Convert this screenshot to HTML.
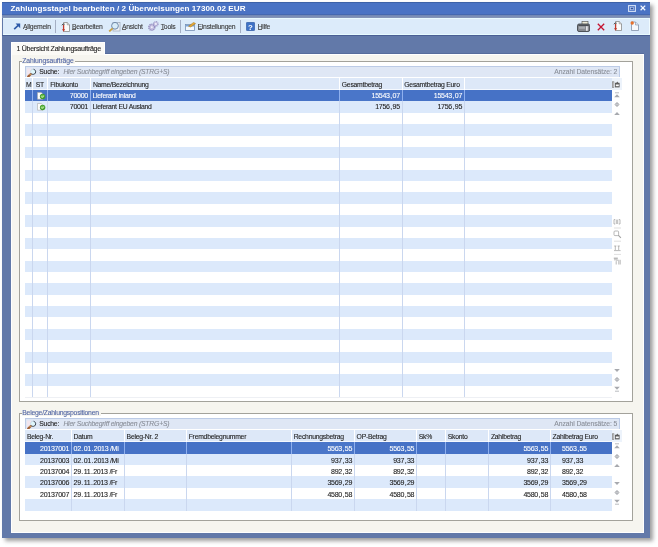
<!DOCTYPE html>
<html><head><meta charset="utf-8"><style>
html,body{margin:0;padding:0}
body{width:658px;height:547px;position:relative;overflow:hidden;background:#fff;font-family:"Liberation Sans",sans-serif;font-size:6.8px;color:#222}
div{position:absolute}
.t{position:absolute;white-space:nowrap;line-height:8px;letter-spacing:-0.23px;-webkit-text-stroke:0.1px currentColor}
svg{display:block}
.p{margin:0 0.6px}
</style></head><body><div style="position:absolute;left:0;top:0;width:658px;height:547px;filter:blur(0.4px)">
<div style="left:4.50px;top:4.50px;width:645.50px;height:533.50px;background:#888;box-shadow:1.5px 1.5px 4px 1.5px rgba(0,0,0,0.38)"></div>
<div style="left:1.50px;top:1.50px;width:648.10px;height:536.00px;background:#6279a9"></div>
<div style="left:1.50px;top:1.50px;width:648.10px;height:13.50px;background:#4a73c4"></div>
<div style="left:1.50px;top:1.50px;width:648.10px;height:1.00px;background:#3d62a8"></div>
<div style="left:1.50px;top:13.80px;width:648.10px;height:1.00px;background:#4468b0"></div>
<div style="left:1.50px;top:14.80px;width:648.10px;height:3.00px;background:linear-gradient(#6f86b4,#8797b8)"></div>
<span class="t" style="left:10.60px;top:5.00px;color:#fff;font-weight:bold;font-size:8.1px;letter-spacing:0.06px;-webkit-text-stroke:0">Zahlungsstapel bearbeiten / 2 Überweisungen 17300.02 EUR</span>
<div style="left:3.00px;top:17.80px;width:646.60px;height:17.20px;background:#dcebfa;border-top:1.5px solid #e8fbff;border-bottom:1.5px solid #e8fbff;border-right:1px solid #f0fbff;box-sizing:border-box"></div>
<div style="left:1.50px;top:35.00px;width:648.10px;height:1.00px;background:#4a5f94"></div>
<div style="left:11.00px;top:53.30px;width:632.90px;height:1.00px;background:#566c9c"></div>
<div style="left:11.00px;top:54.30px;width:632.90px;height:478.30px;background:#f6f5ef;border:1px solid #fff;border-top-width:1.5px;box-sizing:border-box"></div>
<div style="left:10.50px;top:42.00px;width:94.50px;height:13.00px;background:#fbfaf6;border:1px solid #fff;border-bottom:none;box-sizing:border-box"></div>
<span class="t" style="left:16.50px;top:44.85px;;font-size:7.05px;letter-spacing:-0.29px">1 Übersicht Zahlungsaufträge</span>
<div style="left:19.30px;top:61.30px;width:613.50px;height:340.30px;background:#fff;border:1px solid #a3a29b;box-sizing:border-box"></div>
<div style="left:21.50px;top:57.30px;width:53.50px;height:7.00px;background:#f6f5ef"></div>
<span class="t" style="left:22.30px;top:56.80px;color:#5266a4;letter-spacing:-0.1px">Zahlungsaufträge</span>
<div style="left:24.60px;top:66.00px;width:595.80px;height:11.80px;background:#dfe7f5;border:1px solid #bccbe6;box-sizing:border-box"></div>
<svg style="position:absolute;left:25.5px;top:67.00px" width="11" height="11" viewBox="0 0 11 11"><rect x="1" y="1.5" width="4" height="7.5" fill="#f2e6ee"/><circle cx="7.1" cy="4.8" r="2.6" fill="#dff6fb" stroke="#c0d0dc" stroke-width="0.6"/><path d="M7.6 2.25 A2.6 2.6 0 1 1 5.3 6.7" fill="none" stroke="#3e4652" stroke-width="1"/><path d="M4.6 7.2 L2.2 9.6" stroke="#a0603a" stroke-width="2.2" stroke-linecap="round"/><path d="M4.6 7 L3.6 8" stroke="#e0c060" stroke-width="1"/></svg>
<span class="t" style="left:39.30px;top:68.30px;color:#222">Suche:</span>
<span class="t" style="left:63.40px;top:68.30px;color:#8a8f99;font-style:italic;letter-spacing:-0.19px">Hier Suchbegriff eingeben (STRG+S)</span>
<span class="t" style="right:40.70px;top:68.30px;color:#8a8f99;letter-spacing:-0.08px">Anzahl Datensätze: 2</span>
<div style="left:24.60px;top:77.40px;width:597.40px;height:12.70px;background:#dde8f8;border-top:1px solid #fff;border-bottom:1px solid #f4f8fe;box-sizing:border-box"></div>
<div style="left:611.60px;top:77.90px;width:10.40px;height:11.70px;background:#edf3fb"></div>
<svg style="position:absolute;left:612px;top:80.60px" width="8" height="7" viewBox="0 0 8 7"><rect x="0.4" y="0.8" width="1.5" height="5.6" fill="#ececec" stroke="#6a6a6a" stroke-width="0.6"/><rect x="3" y="1.8" width="4.6" height="4.6" fill="#5c5c5c"/><rect x="3.8" y="3.5" width="3" height="1.7" fill="#fafafa"/><path d="M4.3 1.9 L5.3 0.5 L6.3 1.9 Z" fill="#5c5c5c"/></svg>
<span class="t" style="left:25.90px;top:80.60px;">M</span>
<span class="t" style="left:35.70px;top:80.60px;">ST</span>
<span class="t" style="left:50.20px;top:80.60px;">Fibukonto</span>
<span class="t" style="left:92.90px;top:80.60px;">Name/Bezeichnung</span>
<span class="t" style="left:341.80px;top:80.60px;">Gesamtbetrag</span>
<span class="t" style="left:404.30px;top:80.60px;">Gesamtbetrag Euro</span>
<div style="left:24.60px;top:90.10px;width:587.00px;height:11.37px;background:#4672c6"></div>
<div style="left:339.50px;top:90.10px;width:62.50px;height:11.37px;background:#4a76c9"></div>
<div style="left:24.60px;top:101.47px;width:587.00px;height:11.37px;background:#dce9fb"></div>
<div style="left:24.60px;top:112.84px;width:587.00px;height:11.37px;background:#fff"></div>
<div style="left:24.60px;top:124.21px;width:587.00px;height:11.37px;background:#dce9fb"></div>
<div style="left:24.60px;top:135.58px;width:587.00px;height:11.37px;background:#fff"></div>
<div style="left:24.60px;top:146.95px;width:587.00px;height:11.37px;background:#dce9fb"></div>
<div style="left:24.60px;top:158.32px;width:587.00px;height:11.37px;background:#fff"></div>
<div style="left:24.60px;top:169.69px;width:587.00px;height:11.37px;background:#dce9fb"></div>
<div style="left:24.60px;top:181.06px;width:587.00px;height:11.37px;background:#fff"></div>
<div style="left:24.60px;top:192.43px;width:587.00px;height:11.37px;background:#dce9fb"></div>
<div style="left:24.60px;top:203.80px;width:587.00px;height:11.37px;background:#fff"></div>
<div style="left:24.60px;top:215.17px;width:587.00px;height:11.37px;background:#dce9fb"></div>
<div style="left:24.60px;top:226.54px;width:587.00px;height:11.37px;background:#fff"></div>
<div style="left:24.60px;top:237.91px;width:587.00px;height:11.37px;background:#dce9fb"></div>
<div style="left:24.60px;top:249.28px;width:587.00px;height:11.37px;background:#fff"></div>
<div style="left:24.60px;top:260.65px;width:587.00px;height:11.37px;background:#dce9fb"></div>
<div style="left:24.60px;top:272.02px;width:587.00px;height:11.37px;background:#fff"></div>
<div style="left:24.60px;top:283.39px;width:587.00px;height:11.37px;background:#dce9fb"></div>
<div style="left:24.60px;top:294.76px;width:587.00px;height:11.37px;background:#fff"></div>
<div style="left:24.60px;top:306.13px;width:587.00px;height:11.37px;background:#dce9fb"></div>
<div style="left:24.60px;top:317.50px;width:587.00px;height:11.37px;background:#fff"></div>
<div style="left:24.60px;top:328.87px;width:587.00px;height:11.37px;background:#dce9fb"></div>
<div style="left:24.60px;top:340.24px;width:587.00px;height:11.37px;background:#fff"></div>
<div style="left:24.60px;top:351.61px;width:587.00px;height:11.37px;background:#dce9fb"></div>
<div style="left:24.60px;top:362.98px;width:587.00px;height:11.37px;background:#fff"></div>
<div style="left:24.60px;top:374.35px;width:587.00px;height:11.37px;background:#dce9fb"></div>
<div style="left:24.60px;top:385.72px;width:587.00px;height:11.37px;background:#fff"></div>
<div style="left:31.90px;top:77.40px;width:1.00px;height:12.70px;background:#fff"></div>
<div style="left:31.90px;top:90.10px;width:1.00px;height:306.99px;background:#cad7ef"></div>
<div style="left:31.90px;top:90.10px;width:1.00px;height:11.37px;background:#8fb0ee"></div>
<div style="left:46.70px;top:77.40px;width:1.00px;height:12.70px;background:#fff"></div>
<div style="left:46.70px;top:90.10px;width:1.00px;height:306.99px;background:#cad7ef"></div>
<div style="left:46.70px;top:90.10px;width:1.00px;height:11.37px;background:#8fb0ee"></div>
<div style="left:89.70px;top:77.40px;width:1.00px;height:12.70px;background:#fff"></div>
<div style="left:89.70px;top:90.10px;width:1.00px;height:306.99px;background:#cad7ef"></div>
<div style="left:89.70px;top:90.10px;width:1.00px;height:11.37px;background:#8fb0ee"></div>
<div style="left:339.00px;top:77.40px;width:1.00px;height:12.70px;background:#fff"></div>
<div style="left:339.00px;top:90.10px;width:1.00px;height:306.99px;background:#cad7ef"></div>
<div style="left:339.00px;top:90.10px;width:1.00px;height:11.37px;background:#8fb0ee"></div>
<div style="left:401.50px;top:77.40px;width:1.00px;height:12.70px;background:#fff"></div>
<div style="left:401.50px;top:90.10px;width:1.00px;height:306.99px;background:#cad7ef"></div>
<div style="left:401.50px;top:90.10px;width:1.00px;height:11.37px;background:#8fb0ee"></div>
<div style="left:463.80px;top:77.40px;width:1.00px;height:12.70px;background:#fff"></div>
<div style="left:463.80px;top:90.10px;width:1.00px;height:306.99px;background:#cad7ef"></div>
<div style="left:463.80px;top:90.10px;width:1.00px;height:11.37px;background:#8fb0ee"></div>
<svg style="position:absolute;left:36.90px;top:91.50px" width="9" height="8" viewBox="0 0 9 8"><path d="M0.5 0.5 H4.2 L5.8 2.1 V7.2 H0.5 Z" fill="#fcfcfc" stroke="#a9a9a9" stroke-width="0.6"/><circle cx="5.6" cy="4.5" r="2.7" fill="#3f9a2e"/><circle cx="5.4" cy="4.2" r="1.8" fill="#6cc04c"/><path d="M4.4 4.6 L5.3 5.4 L6.8 3.6" stroke="#e8ffd8" stroke-width="0.8" fill="none"/></svg>
<span class="t" style="right:570.00px;top:91.95px;color:#fff;font-size:7.05px;letter-spacing:-0.29px">70000</span>
<span class="t" style="left:92.40px;top:92.10px;color:#fff">Lieferant Inland</span>
<span class="t" style="right:258.20px;top:91.95px;color:#fff;font-size:7.05px;letter-spacing:-0.29px">15543<span class="p">,</span>07</span>
<span class="t" style="right:195.90px;top:91.95px;color:#fff;font-size:7.05px;letter-spacing:-0.29px">15543<span class="p">,</span>07</span>
<svg style="position:absolute;left:36.90px;top:102.87px" width="9" height="8" viewBox="0 0 9 8"><path d="M0.5 0.5 H4.2 L5.8 2.1 V7.2 H0.5 Z" fill="#fcfcfc" stroke="#a9a9a9" stroke-width="0.6"/><circle cx="5.6" cy="4.5" r="2.7" fill="#3f9a2e"/><circle cx="5.4" cy="4.2" r="1.8" fill="#6cc04c"/><path d="M4.4 4.6 L5.3 5.4 L6.8 3.6" stroke="#e8ffd8" stroke-width="0.8" fill="none"/></svg>
<span class="t" style="right:570.00px;top:103.32px;color:#222;font-size:7.05px;letter-spacing:-0.29px">70001</span>
<span class="t" style="left:92.40px;top:103.47px;color:#222">Lieferant EU Ausland</span>
<span class="t" style="right:258.20px;top:103.32px;color:#222;font-size:7.05px;letter-spacing:-0.29px">1756<span class="p">,</span>95</span>
<span class="t" style="right:195.90px;top:103.32px;color:#222;font-size:7.05px;letter-spacing:-0.29px">1756<span class="p">,</span>95</span>
<div style="left:24.60px;top:397.00px;width:587.00px;height:1.00px;background:#eef0f4"></div>
<svg style="position:absolute;left:612.8px;top:91.50px" width="8" height="7" viewBox="0 0 8 7"><path d="M2 0.8 H6" stroke="#a7a9ae" stroke-width="0.8"/><path d="M1.2 5.2 L4 2.2 L6.8 5.2 Z" fill="#a7a9ae"/></svg>
<svg style="position:absolute;left:612.8px;top:100.50px" width="8" height="7" viewBox="0 0 8 7"><path d="M4 1 L6.6 3.5 L4 6 L1.4 3.5 Z" fill="#a7a9ae"/><path d="M4 1.5 V5.5 M2 3.5 H6" stroke="#d8dadd" stroke-width="0.5"/></svg>
<svg style="position:absolute;left:612.8px;top:109.50px" width="8" height="7" viewBox="0 0 8 7"><path d="M1.2 5 L4 2 L6.8 5 Z" fill="#a7a9ae"/></svg>
<svg style="position:absolute;left:612.8px;top:366.50px" width="8" height="7" viewBox="0 0 8 7"><path d="M1.2 2 L4 5 L6.8 2 Z" fill="#a7a9ae"/></svg>
<svg style="position:absolute;left:612.8px;top:375.80px" width="8" height="7" viewBox="0 0 8 7"><path d="M4 1 L6.6 3.5 L4 6 L1.4 3.5 Z" fill="#a7a9ae"/><path d="M4 1.5 V5.5 M2 3.5 H6" stroke="#d8dadd" stroke-width="0.5"/></svg>
<svg style="position:absolute;left:612.8px;top:384.50px" width="8" height="7" viewBox="0 0 8 7"><path d="M2 6.2 H6" stroke="#a7a9ae" stroke-width="0.8"/><path d="M1.2 1.8 L4 4.8 L6.8 1.8 Z" fill="#a7a9ae"/></svg>
<svg style="position:absolute;left:613px;top:217px" width="9" height="49" viewBox="0 0 9 49"><g fill="none" stroke="#a2a2a2" stroke-width="0.75"><path d="M2.2 2.6 H1 V7 H2.2 M5.8 2.6 H7 V7 H5.8 M3.3 2.6 V7 M4.7 2.6 V7"/><path d="M1 11 H8" stroke="#c9c9c9" stroke-width="0.6"/><rect x="1" y="14" width="4.6" height="4.6" rx="1"/><path d="M5.2 18.2 L7.9 20.9" stroke-width="1.1"/><path d="M1 24.2 H8" stroke="#c9c9c9" stroke-width="0.6"/><path d="M1.2 29 H3.4 M2.3 29 V33 M4.6 29 H6.8 M5.7 29 V33 M1 33.6 H7.6"/><path d="M1 37.4 H8" stroke="#c9c9c9" stroke-width="0.6"/><path d="M0.8 41.2 H4.8" stroke="#8e8e8e" stroke-width="0.9"/><path d="M1 42.8 H4.6 L3.2 44.6 V47.5 M5.8 42.8 V47.5 M7.2 42.8 V47.5"/></g></svg>
<div style="left:19.30px;top:413.00px;width:613.50px;height:108.00px;background:#fff;border:1px solid #a3a29b;box-sizing:border-box"></div>
<div style="left:21.50px;top:409.00px;width:79.50px;height:7.00px;background:#f6f5ef"></div>
<span class="t" style="left:22.30px;top:408.50px;color:#5266a4;letter-spacing:-0.22px">Belege/Zahlungspositionen</span>
<div style="left:24.60px;top:418.00px;width:595.80px;height:11.80px;background:#dfe7f5;border:1px solid #bccbe6;box-sizing:border-box"></div>
<svg style="position:absolute;left:25.5px;top:419.00px" width="11" height="11" viewBox="0 0 11 11"><rect x="1" y="1.5" width="4" height="7.5" fill="#f2e6ee"/><circle cx="7.1" cy="4.8" r="2.6" fill="#dff6fb" stroke="#c0d0dc" stroke-width="0.6"/><path d="M7.6 2.25 A2.6 2.6 0 1 1 5.3 6.7" fill="none" stroke="#3e4652" stroke-width="1"/><path d="M4.6 7.2 L2.2 9.6" stroke="#a0603a" stroke-width="2.2" stroke-linecap="round"/><path d="M4.6 7 L3.6 8" stroke="#e0c060" stroke-width="1"/></svg>
<span class="t" style="left:39.30px;top:420.30px;color:#222">Suche:</span>
<span class="t" style="left:63.40px;top:420.30px;color:#8a8f99;font-style:italic;letter-spacing:-0.19px">Hier Suchbegriff eingeben (STRG+S)</span>
<span class="t" style="right:40.70px;top:420.30px;color:#8a8f99;letter-spacing:-0.08px">Anzahl Datensätze: 5</span>
<div style="left:24.60px;top:429.40px;width:597.40px;height:12.90px;background:#dde8f8;border-top:1px solid #fff;border-bottom:1px solid #f4f8fe;box-sizing:border-box"></div>
<div style="left:611.60px;top:429.90px;width:10.40px;height:11.90px;background:#edf3fb"></div>
<svg style="position:absolute;left:612px;top:432.60px" width="8" height="7" viewBox="0 0 8 7"><rect x="0.4" y="0.8" width="1.5" height="5.6" fill="#ececec" stroke="#6a6a6a" stroke-width="0.6"/><rect x="3" y="1.8" width="4.6" height="4.6" fill="#5c5c5c"/><rect x="3.8" y="3.5" width="3" height="1.7" fill="#fafafa"/><path d="M4.3 1.9 L5.3 0.5 L6.3 1.9 Z" fill="#5c5c5c"/></svg>
<span class="t" style="left:26.90px;top:432.60px;">Beleg-Nr.</span>
<span class="t" style="left:73.60px;top:432.60px;">Datum</span>
<span class="t" style="left:126.60px;top:432.60px;">Beleg-Nr. 2</span>
<span class="t" style="left:188.70px;top:432.60px;">Fremdbelegnummer</span>
<span class="t" style="left:293.70px;top:432.60px;">Rechnungsbetrag</span>
<span class="t" style="left:356.60px;top:432.60px;">OP-Betrag</span>
<span class="t" style="left:418.70px;top:432.60px;">Sk%</span>
<span class="t" style="left:447.70px;top:432.60px;">Skonto</span>
<span class="t" style="left:490.90px;top:432.60px;">Zahlbetrag</span>
<span class="t" style="left:552.60px;top:432.60px;">Zahlbetrag Euro</span>
<div style="left:24.60px;top:442.30px;width:587.00px;height:11.37px;background:#4672c6"></div>
<div style="left:291.40px;top:442.30px;width:62.90px;height:11.37px;background:#4a76c9"></div>
<div style="left:24.60px;top:453.67px;width:587.00px;height:11.37px;background:#dce9fb"></div>
<div style="left:24.60px;top:465.04px;width:587.00px;height:11.37px;background:#fff"></div>
<div style="left:24.60px;top:476.41px;width:587.00px;height:11.37px;background:#dce9fb"></div>
<div style="left:24.60px;top:487.78px;width:587.00px;height:11.37px;background:#fff"></div>
<div style="left:24.60px;top:499.15px;width:587.00px;height:11.37px;background:#dce9fb"></div>
<div style="left:70.80px;top:429.40px;width:1.00px;height:12.90px;background:#fff"></div>
<div style="left:70.80px;top:442.30px;width:1.00px;height:68.22px;background:#cad7ef"></div>
<div style="left:70.80px;top:442.30px;width:1.00px;height:11.37px;background:#8fb0ee"></div>
<div style="left:123.80px;top:429.40px;width:1.00px;height:12.90px;background:#fff"></div>
<div style="left:123.80px;top:442.30px;width:1.00px;height:68.22px;background:#cad7ef"></div>
<div style="left:123.80px;top:442.30px;width:1.00px;height:11.37px;background:#8fb0ee"></div>
<div style="left:185.90px;top:429.40px;width:1.00px;height:12.90px;background:#fff"></div>
<div style="left:185.90px;top:442.30px;width:1.00px;height:68.22px;background:#cad7ef"></div>
<div style="left:185.90px;top:442.30px;width:1.00px;height:11.37px;background:#8fb0ee"></div>
<div style="left:290.90px;top:429.40px;width:1.00px;height:12.90px;background:#fff"></div>
<div style="left:290.90px;top:442.30px;width:1.00px;height:68.22px;background:#cad7ef"></div>
<div style="left:290.90px;top:442.30px;width:1.00px;height:11.37px;background:#8fb0ee"></div>
<div style="left:353.80px;top:429.40px;width:1.00px;height:12.90px;background:#fff"></div>
<div style="left:353.80px;top:442.30px;width:1.00px;height:68.22px;background:#cad7ef"></div>
<div style="left:353.80px;top:442.30px;width:1.00px;height:11.37px;background:#8fb0ee"></div>
<div style="left:415.90px;top:429.40px;width:1.00px;height:12.90px;background:#fff"></div>
<div style="left:415.90px;top:442.30px;width:1.00px;height:68.22px;background:#cad7ef"></div>
<div style="left:415.90px;top:442.30px;width:1.00px;height:11.37px;background:#8fb0ee"></div>
<div style="left:444.90px;top:429.40px;width:1.00px;height:12.90px;background:#fff"></div>
<div style="left:444.90px;top:442.30px;width:1.00px;height:68.22px;background:#cad7ef"></div>
<div style="left:444.90px;top:442.30px;width:1.00px;height:11.37px;background:#8fb0ee"></div>
<div style="left:488.10px;top:429.40px;width:1.00px;height:12.90px;background:#fff"></div>
<div style="left:488.10px;top:442.30px;width:1.00px;height:68.22px;background:#cad7ef"></div>
<div style="left:488.10px;top:442.30px;width:1.00px;height:11.37px;background:#8fb0ee"></div>
<div style="left:549.80px;top:429.40px;width:1.00px;height:12.90px;background:#fff"></div>
<div style="left:549.80px;top:442.30px;width:1.00px;height:68.22px;background:#cad7ef"></div>
<div style="left:549.80px;top:442.30px;width:1.00px;height:11.37px;background:#8fb0ee"></div>
<span class="t" style="right:588.90px;top:445.25px;color:#fff;font-size:7.05px;letter-spacing:-0.29px">20137001</span>
<span class="t" style="left:73.50px;top:445.25px;color:#fff;font-size:7.05px;letter-spacing:-0.29px">02<span class="p">.</span>01<span class="p">.</span>2013 /Mi</span>
<span class="t" style="right:305.90px;top:445.25px;color:#fff;font-size:7.05px;letter-spacing:-0.29px">5563<span class="p">,</span>55</span>
<span class="t" style="right:243.80px;top:445.25px;color:#fff;font-size:7.05px;letter-spacing:-0.29px">5563<span class="p">,</span>55</span>
<span class="t" style="right:109.90px;top:445.25px;color:#fff;font-size:7.05px;letter-spacing:-0.29px">5563<span class="p">,</span>55</span>
<span class="t" style="left:562.00px;top:445.25px;color:#fff;font-size:7.05px;letter-spacing:-0.29px">5563<span class="p">,</span>55</span>
<span class="t" style="right:588.90px;top:456.62px;color:#222;font-size:7.05px;letter-spacing:-0.29px">20137003</span>
<span class="t" style="left:73.50px;top:456.62px;color:#222;font-size:7.05px;letter-spacing:-0.29px">02<span class="p">.</span>01<span class="p">.</span>2013 /Mi</span>
<span class="t" style="right:305.90px;top:456.62px;color:#222;font-size:7.05px;letter-spacing:-0.29px">937<span class="p">,</span>33</span>
<span class="t" style="right:243.80px;top:456.62px;color:#222;font-size:7.05px;letter-spacing:-0.29px">937<span class="p">,</span>33</span>
<span class="t" style="right:109.90px;top:456.62px;color:#222;font-size:7.05px;letter-spacing:-0.29px">937<span class="p">,</span>33</span>
<span class="t" style="left:562.00px;top:456.62px;color:#222;font-size:7.05px;letter-spacing:-0.29px">937<span class="p">,</span>33</span>
<span class="t" style="right:588.90px;top:467.99px;color:#222;font-size:7.05px;letter-spacing:-0.29px">20137004</span>
<span class="t" style="left:73.50px;top:467.99px;color:#222;font-size:7.05px;letter-spacing:-0.29px">29<span class="p">.</span>11<span class="p">.</span>2013 /Fr</span>
<span class="t" style="right:305.90px;top:467.99px;color:#222;font-size:7.05px;letter-spacing:-0.29px">892<span class="p">,</span>32</span>
<span class="t" style="right:243.80px;top:467.99px;color:#222;font-size:7.05px;letter-spacing:-0.29px">892<span class="p">,</span>32</span>
<span class="t" style="right:109.90px;top:467.99px;color:#222;font-size:7.05px;letter-spacing:-0.29px">892<span class="p">,</span>32</span>
<span class="t" style="left:562.00px;top:467.99px;color:#222;font-size:7.05px;letter-spacing:-0.29px">892<span class="p">,</span>32</span>
<span class="t" style="right:588.90px;top:479.36px;color:#222;font-size:7.05px;letter-spacing:-0.29px">20137006</span>
<span class="t" style="left:73.50px;top:479.36px;color:#222;font-size:7.05px;letter-spacing:-0.29px">29<span class="p">.</span>11<span class="p">.</span>2013 /Fr</span>
<span class="t" style="right:305.90px;top:479.36px;color:#222;font-size:7.05px;letter-spacing:-0.29px">3569<span class="p">,</span>29</span>
<span class="t" style="right:243.80px;top:479.36px;color:#222;font-size:7.05px;letter-spacing:-0.29px">3569<span class="p">,</span>29</span>
<span class="t" style="right:109.90px;top:479.36px;color:#222;font-size:7.05px;letter-spacing:-0.29px">3569<span class="p">,</span>29</span>
<span class="t" style="left:562.00px;top:479.36px;color:#222;font-size:7.05px;letter-spacing:-0.29px">3569<span class="p">,</span>29</span>
<span class="t" style="right:588.90px;top:490.73px;color:#222;font-size:7.05px;letter-spacing:-0.29px">20137007</span>
<span class="t" style="left:73.50px;top:490.73px;color:#222;font-size:7.05px;letter-spacing:-0.29px">29<span class="p">.</span>11<span class="p">.</span>2013 /Fr</span>
<span class="t" style="right:305.90px;top:490.73px;color:#222;font-size:7.05px;letter-spacing:-0.29px">4580<span class="p">,</span>58</span>
<span class="t" style="right:243.80px;top:490.73px;color:#222;font-size:7.05px;letter-spacing:-0.29px">4580<span class="p">,</span>58</span>
<span class="t" style="right:109.90px;top:490.73px;color:#222;font-size:7.05px;letter-spacing:-0.29px">4580<span class="p">,</span>58</span>
<span class="t" style="left:562.00px;top:490.73px;color:#222;font-size:7.05px;letter-spacing:-0.29px">4580<span class="p">,</span>58</span>
<svg style="position:absolute;left:612.8px;top:443.10px" width="8" height="7" viewBox="0 0 8 7"><path d="M2 0.8 H6" stroke="#a7a9ae" stroke-width="0.8"/><path d="M1.2 5.2 L4 2.2 L6.8 5.2 Z" fill="#a7a9ae"/></svg>
<svg style="position:absolute;left:612.8px;top:452.80px" width="8" height="7" viewBox="0 0 8 7"><path d="M4 1 L6.6 3.5 L4 6 L1.4 3.5 Z" fill="#a7a9ae"/><path d="M4 1.5 V5.5 M2 3.5 H6" stroke="#d8dadd" stroke-width="0.5"/></svg>
<svg style="position:absolute;left:612.8px;top:461.50px" width="8" height="7" viewBox="0 0 8 7"><path d="M1.2 5 L4 2 L6.8 5 Z" fill="#a7a9ae"/></svg>
<svg style="position:absolute;left:612.8px;top:479.70px" width="8" height="7" viewBox="0 0 8 7"><path d="M1.2 2 L4 5 L6.8 2 Z" fill="#a7a9ae"/></svg>
<svg style="position:absolute;left:612.8px;top:489.00px" width="8" height="7" viewBox="0 0 8 7"><path d="M4 1 L6.6 3.5 L4 6 L1.4 3.5 Z" fill="#a7a9ae"/><path d="M4 1.5 V5.5 M2 3.5 H6" stroke="#d8dadd" stroke-width="0.5"/></svg>
<svg style="position:absolute;left:612.8px;top:498.30px" width="8" height="7" viewBox="0 0 8 7"><path d="M2 6.2 H6" stroke="#a7a9ae" stroke-width="0.8"/><path d="M1.2 1.8 L4 4.8 L6.8 1.8 Z" fill="#a7a9ae"/></svg>
<svg style="position:absolute;left:12.5px;top:23px" width="8" height="7" viewBox="0 0 8 7"><path d="M1.2 6.2 L6 1.6" stroke="#2f5aa8" stroke-width="1.6" fill="none"/><path d="M2.6 0.6 H7.2 V5.2 Z" fill="#2f5aa8"/></svg>
<span class="t" style="left:23.00px;top:22.80px;color:#383838">Allgemein</span>
<div style="left:24.50px;top:29.30px;width:2.00px;height:0.70px;background:#666"></div>
<div style="left:54.90px;top:20.00px;width:1.00px;height:13.00px;background:#a4afc4"></div>
<svg style="position:absolute;left:61px;top:21.7px" width="9" height="10" viewBox="0 0 9 10"><path d="M2.5 0.5 H6.2 L8.5 2.8 V9.5 H2.5 Z" fill="#fbfbfb" stroke="#8a8a8a" stroke-width="0.8"/><path d="M6.2 0.5 V2.8 H8.5" fill="#ddd" stroke="#8a8a8a" stroke-width="0.6"/><path d="M0.8 3.2 Q1.8 1.4 3.8 2.2" stroke="#444" stroke-width="0.9" fill="none"/><path d="M2.6 3 V8" stroke="#c0382a" stroke-width="1.3"/><path d="M1 7.2 L2.6 9.8 L4.2 7.2 Z" fill="#c0382a"/></svg>
<span class="t" style="left:72.00px;top:22.80px;color:#383838">Bearbeiten</span>
<div style="left:72.00px;top:29.30px;width:3.50px;height:0.70px;background:#666"></div>
<svg style="position:absolute;left:108px;top:20.7px" width="13" height="11" viewBox="0 0 13 11"><rect x="5" y="1.5" width="7" height="8.5" fill="#eef2f7" stroke="#9aa5b5" stroke-width="0.7"/><circle cx="7" cy="4.8" r="3.4" fill="#d8ecf8" stroke="#7088a8" stroke-width="1"/><path d="M4.6 7.4 L1.2 10.4" stroke="#c9a040" stroke-width="1.9"/></svg>
<span class="t" style="left:122.00px;top:22.80px;color:#383838">Ansicht</span>
<div style="left:122.00px;top:29.30px;width:4.00px;height:0.70px;background:#666"></div>
<svg style="position:absolute;left:147.8px;top:21.3px" width="11" height="10" viewBox="0 0 11 10"><circle cx="3.8" cy="6.3" r="3" fill="#c4bfe0" stroke="#948fc0" stroke-width="1.4" stroke-dasharray="1.2 0.7"/><circle cx="3.8" cy="6.3" r="1" fill="#f0eefa"/><circle cx="7.8" cy="2.9" r="2.2" fill="#d6d2ec" stroke="#948fc0" stroke-width="1.2" stroke-dasharray="1 0.6"/><circle cx="7.8" cy="2.9" r="0.8" fill="#f5f4fb"/></svg>
<span class="t" style="left:160.70px;top:22.80px;color:#383838">Tools</span>
<div style="left:160.70px;top:29.30px;width:3.50px;height:0.70px;background:#666"></div>
<div style="left:180.00px;top:20.00px;width:1.00px;height:13.00px;background:#a4afc4"></div>
<svg style="position:absolute;left:184.7px;top:21.8px" width="11" height="9" viewBox="0 0 11 9"><rect x="0.5" y="2.5" width="9" height="6" fill="#f4f8fc" stroke="#7590b4" stroke-width="0.8"/><rect x="0.9" y="2.9" width="8.2" height="1.6" fill="#7aa4d8"/><path d="M3.5 4.2 L8.6 0.4 L10.6 1.6 L5.6 5 Z" fill="#e6a832" stroke="#a8741a" stroke-width="0.5"/></svg>
<span class="t" style="left:197.50px;top:22.80px;color:#383838">Einstellungen</span>
<div style="left:197.50px;top:29.30px;width:4.00px;height:0.70px;background:#666"></div>
<div style="left:240.20px;top:20.00px;width:1.00px;height:13.00px;background:#a4afc4"></div>
<svg style="position:absolute;left:246px;top:21.7px" width="9" height="9" viewBox="0 0 9 9"><rect x="0.3" y="0.3" width="8.4" height="8.4" rx="1.2" fill="#3f72c6" stroke="#2d5498" stroke-width="0.6"/><text x="4.5" y="7.6" font-family="Liberation Sans" font-weight="bold" font-size="7.8" fill="#fff" text-anchor="middle">?</text></svg>
<span class="t" style="left:257.70px;top:22.80px;color:#383838">Hilfe</span>
<div style="left:257.70px;top:29.30px;width:4.00px;height:0.70px;background:#666"></div>
<svg style="position:absolute;left:577px;top:20.8px" width="13" height="11" viewBox="0 0 13 11"><rect x="5" y="0.4" width="6" height="3.4" fill="#ecebd8" stroke="#4a4a4a" stroke-width="0.6"/><path d="M0.5 4.6 Q0.5 3 2 3 H11.3 Q12.6 3 12.6 4.6 V9 Q12.6 10.5 11.1 10.5 H2 Q0.5 10.5 0.5 9 Z" fill="#868a90" stroke="#35383d" stroke-width="0.8"/><rect x="1.4" y="3.6" width="10.4" height="1.4" fill="#4a4e54"/><rect x="2" y="5.6" width="6" height="2.2" fill="#a9adb3"/><rect x="9" y="5.2" width="1.7" height="4.6" fill="#e4e6ea"/></svg>
<svg style="position:absolute;left:596.5px;top:23px" width="8" height="8" viewBox="0 0 8 8"><path d="M0.8 0.8 L7.2 7.2 M7.2 0.8 L0.8 7.2" stroke="#c41230" stroke-width="1.3"/></svg>
<svg style="position:absolute;left:613.3px;top:21px" width="9" height="10" viewBox="0 0 9 10"><path d="M2.5 0.5 H6.2 L8.5 2.8 V9.5 H2.5 Z" fill="#fbfbfb" stroke="#8a8a8a" stroke-width="0.8"/><path d="M6.2 0.5 V2.8 H8.5" fill="#ddd" stroke="#8a8a8a" stroke-width="0.6"/><path d="M0.8 3.2 Q1.8 1.4 3.8 2.2" stroke="#444" stroke-width="0.9" fill="none"/><path d="M2.6 3 V8" stroke="#c0382a" stroke-width="1.3"/><path d="M1 7.2 L2.6 9.8 L4.2 7.2 Z" fill="#c0382a"/></svg>
<svg style="position:absolute;left:629.5px;top:21px" width="9" height="10" viewBox="0 0 9 10"><path d="M1.5 1 H5.5 L8.5 4 V9.5 H1.5 Z" fill="#f6f8fc" stroke="#8090a8" stroke-width="0.8"/><path d="M5.5 1 V4 H8.5" fill="#dde3ee" stroke="#8090a8" stroke-width="0.6"/><circle cx="2.2" cy="2" r="1.7" fill="#e8702a"/></svg>
<svg style="position:absolute;left:628px;top:4.9px" width="8" height="7" viewBox="0 0 8 7"><rect x="0.6" y="0.6" width="6.8" height="5.8" fill="none" stroke="#d4e0f6" stroke-width="1.1"/><rect x="2.4" y="2.3" width="3.2" height="2.4" fill="#2f509a" stroke="#b8c9ec" stroke-width="0.7"/></svg>
<svg style="position:absolute;left:640px;top:5.2px" width="6" height="6" viewBox="0 0 6 6"><path d="M0.6 0.6 L5.2 5.2 M5.2 0.6 L0.6 5.2" stroke="#f4f8ff" stroke-width="1.3"/></svg>
</div></body></html>
